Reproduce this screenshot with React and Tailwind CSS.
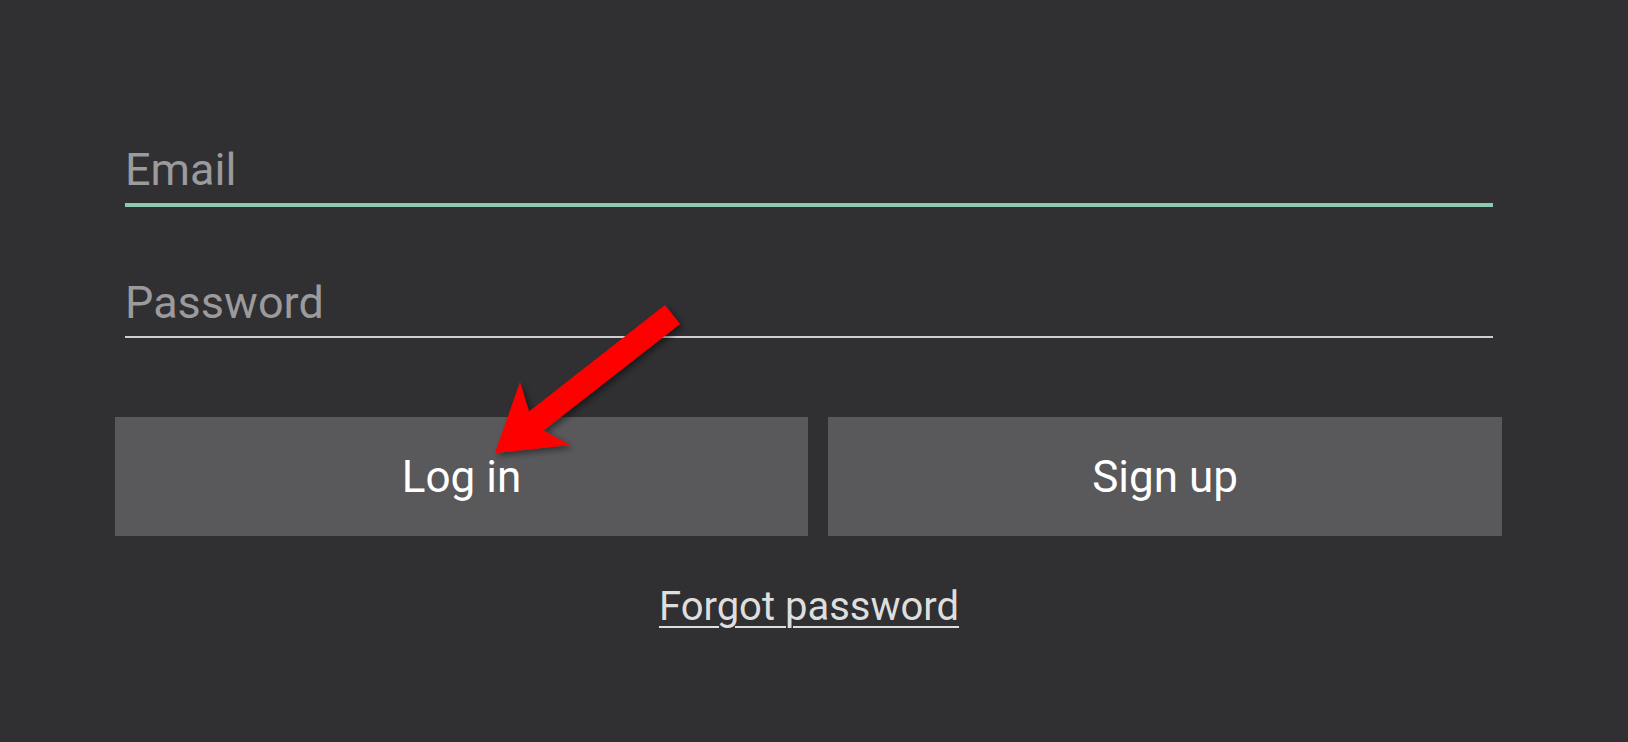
export default function App() {
  return (
    <div
      className="relative w-full h-[742px] overflow-hidden bg-[#302f32]"
      style={{ fontFamily: "Roboto, 'Liberation Sans', sans-serif" }}
    >
      <div className="flex flex-col">
        {/* Email */}
        <div className="ml-[125px] mt-[144px] w-[1368px] pb-[7px] border-b-[4px] border-[#8ccab4]">
          <div className="text-[45px] leading-[52px] text-[#9b9a9d]">Email</div>
        </div>
        {/* Password */}
        <div className="ml-[125px] mt-[70px] w-[1368px] pb-[7px] border-b-[2px] border-[#cfcfd0]">
          <div className="text-[45px] leading-[52px] text-[#9b9a9d]">Password</div>
        </div>
        {/* Buttons */}
        <div className="ml-[115px] mt-[79px] flex gap-[20px]">
          <button className="w-[693px] h-[119px] flex items-center justify-center bg-[#59585b] text-white text-[44px] leading-[52px]">
            Log in
          </button>
          <button className="w-[674px] h-[119px] flex items-center justify-center bg-[#59585b] text-white text-[44px] leading-[52px]">
            Sign up
          </button>
        </div>
        {/* Forgot */}
        <div className="ml-[125px] w-[1368px] mt-[48px] flex justify-center">
          <span className="text-[40px] leading-[46px] text-[#dedede] underline decoration-[2px] underline-offset-[6px]">
            Forgot password
          </span>
        </div>
      </div>

      <svg
        className="absolute inset-0 pointer-events-none"
        width="1628"
        height="742"
        viewBox="0 0 1628 742"
      >
        <defs>
          <filter id="sh" x="-20%" y="-20%" width="140%" height="140%">
            <feDropShadow dx="3" dy="3" stdDeviation="3" floodColor="#000" floodOpacity="0.45" />
          </filter>
        </defs>
        <polygon
          points="495,453 520,382 529,411.5 665,305 680,324 543.5,430.5 570,445"
          fill="#ff0000"
          filter="url(#sh)"
        />
      </svg>
    </div>
  );
}
